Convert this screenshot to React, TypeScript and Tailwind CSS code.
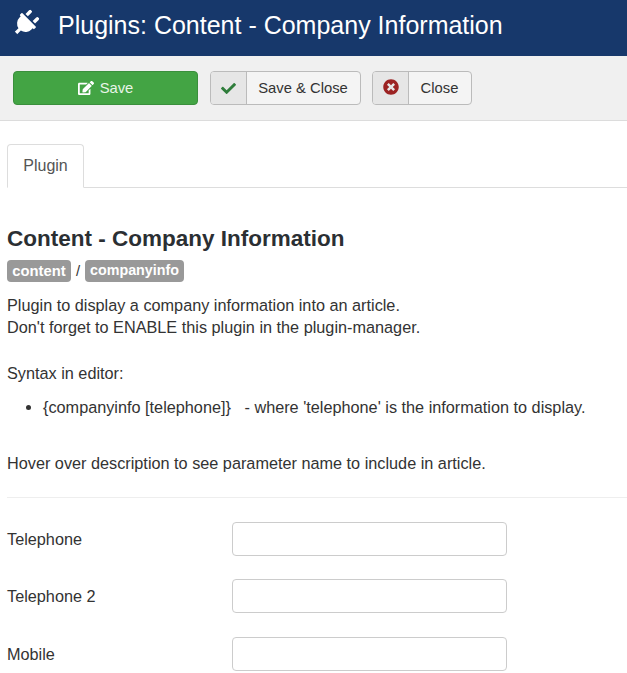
import React from "react";
import { FaPlug, FaCheck, FaTimesCircle, FaEdit } from "react-icons/fa";

function Field({ label, mt }: { label: string; mt: string }) {
  return (
    <div className={`flex items-center ${mt}`}>
      <label className="w-[225px] text-[16.25px] leading-[20px] text-[#333]">{label}</label>
      <div className="w-[275px] h-[34px] rounded-[4px] border border-[#ccc] bg-white" />
    </div>
  );
}

export default function App() {
  return (
    <div className="w-[627px] h-[673px] overflow-hidden bg-white text-[#333] font-['Liberation_Sans',Arial,sans-serif]">
      <header className="h-[56px] bg-[#17386b] flex items-center text-white">
        <FaPlug className="ml-[12px] w-[27px] h-[27px] -mt-[10px] rotate-45" />
        <h1 className="ml-[19px] text-[25px] leading-[30px] -mt-[6px] font-normal">Plugins: Content - Company Information</h1>
      </header>
      <div className="h-[65px] bg-[#f0f0f0] border-b border-[#dcdcdc] flex items-start pt-[15px] pl-[13px]">
        <button className="w-[185px] h-[34px] rounded-[4px] bg-[#43a444] border border-[#3a8f3c] text-[#e8f5e8] text-[14.8px] flex items-center justify-center gap-[6px]">
          <FaEdit className="w-[16px] h-[16px] text-white" />
          <span className="pt-[1px]">Save</span>
        </button>
        <button className="ml-[12px] w-[151px] h-[34px] rounded-[4px] border border-[#bbb] bg-[#f4f4f4] flex items-stretch text-[14.8px] text-[#333] overflow-hidden">
          <span className="w-[36px] bg-[#e6e6e6] border-r border-[#bbb] flex items-center justify-center">
            <FaCheck className="w-[15px] h-[15px] text-[#2f7d3b]" />
          </span>
          <span className="flex-1 flex items-center justify-center pt-[1px] pr-[1px]">Save &amp; Close</span>
        </button>
        <button className="ml-[11px] w-[100px] h-[34px] rounded-[4px] border border-[#bbb] bg-[#f4f4f4] flex items-stretch text-[14.8px] text-[#333] overflow-hidden">
          <span className="w-[36px] bg-[#e6e6e6] border-r border-[#bbb] flex items-center justify-center">
            <FaTimesCircle className="w-[16px] h-[16px] -mt-[2px] text-[#9c2323]" />
          </span>
          <span className="flex-1 flex items-center justify-center pt-[1px] pr-[1px]">Close</span>
        </button>
      </div>
      <main className="px-[7px]">
        <div className="mt-[23px] h-[44px] border-b border-[#ddd] flex -mr-[7px]">
          <div className="w-[77px] h-[44px] border border-[#ddd] border-b-white rounded-t-[4px] bg-white text-[#555] text-[16px] flex items-center justify-center">Plugin</div>
        </div>
        <h2 className="mt-[38px] text-[22.5px] leading-[26px] font-bold text-[#2b2f33]">Content - Company Information</h2>
        <div className="mt-[8px] flex items-center h-[22px]">
          <span className="w-[64px] h-[22px] rounded-[4px] bg-[#999] text-white text-[14.8px] font-bold flex items-center justify-center">content</span>
          <span className="w-[14px] text-center text-[14.8px] text-[#333]">/</span>
          <span className="w-[99px] h-[22px] rounded-[4px] bg-[#999] text-white text-[14.3px] font-bold flex items-center justify-center">companyinfo</span>
        </div>
        <p className="mt-[12px] text-[16.25px] leading-[22px]">Plugin to display a company information into an article.<br />Don't forget to ENABLE this plugin in the plugin-manager.</p>
        <p className="mt-[24px] text-[16.25px] leading-[22px]">Syntax in editor:</p>
        <ul className="mt-[12px] ml-[36px] list-disc text-[16.25px] leading-[22px]">
          <li><span className="whitespace-pre">{"{companyinfo [telephone]}   - where 'telephone' is the information to display."}</span></li>
        </ul>
        <p className="mt-[34px] text-[16.25px] leading-[22px]">Hover over description to see parameter name to include in article.</p>
        <div className="mt-[23px] border-t border-[#eee] -mr-[7px]" />
        <Field label="Telephone" mt="mt-[24px]" />
        <Field label="Telephone 2" mt="mt-[23px]" />
        <Field label="Mobile" mt="mt-[24px]" />
      </main>
    </div>
  );
}
